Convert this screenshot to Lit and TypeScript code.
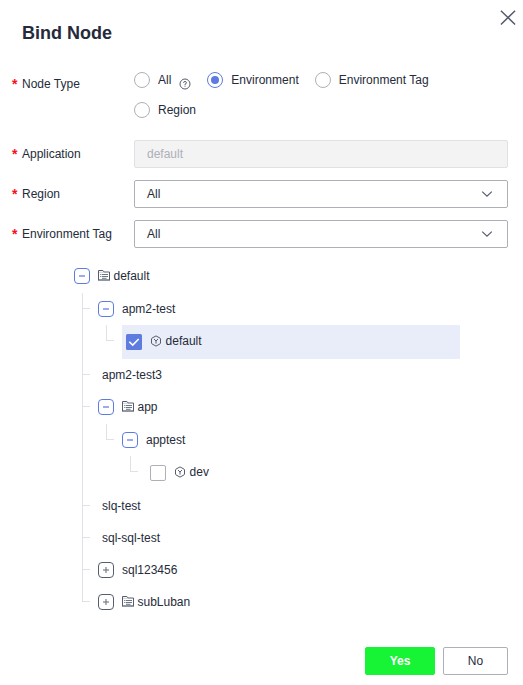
import { LitElement, html, css, svg, nothing, TemplateResult } from "lit";
import { customElement, property } from "lit/decorators.js";
import { classMap } from "lit/directives/class-map.js";

interface TreeItem {
  label: string;
  icon?: "folder" | "env";
  toggle?: "open" | "closed";
  check?: "on" | "off";
  children?: TreeItem[];
}

const TREE: TreeItem = {
  label: "default",
  icon: "folder",
  toggle: "open",
  children: [
    {
      label: "apm2-test",
      toggle: "open",
      children: [{ label: "default", icon: "env", check: "on" }],
    },
    { label: "apm2-test3" },
    {
      label: "app",
      icon: "folder",
      toggle: "open",
      children: [
        {
          label: "apptest",
          toggle: "open",
          children: [{ label: "dev", icon: "env", check: "off" }],
        },
      ],
    },
    { label: "slq-test" },
    { label: "sql-sql-test" },
    { label: "sql123456", toggle: "closed" },
    { label: "subLuban", icon: "folder", toggle: "closed" },
  ],
};

const folderIcon = html`<svg class="folder" width="12" height="12" viewBox="0 0 12 12" fill="none" stroke="#575d6c">
  <path d="M.5 11V1.5" />
  <path d="M.5 1.5h4.4l1.3 1.5h5.3V11" />
  <path d="M0 11h12" stroke-width="1.3" />
  <path d="M1 3.3h5.5" stroke-opacity=".4" stroke-width=".8" />
  <path d="M2.2 5.5h1.2M4 5.5h6M2.2 7.5h1.2M4 7.5h6M4 9.3h4.5" stroke-opacity=".85" />
</svg>`;

const envIcon = html`<svg class="env" width="12" height="12" viewBox="0 0 12 12" fill="none" stroke="#575d6c">
  <path d="M6 .9 10 3.1Q10.5 3.4 10.5 4v4q0 .6-.5.9L6 11.1 2 8.9Q1.5 8.6 1.5 8V4q0-.6.5-.9Z" />
  <path d="M4 4l2 2 2-2M6 6v2.6" />
</svg>`;

@customElement("tree-node")
export class TreeNode extends LitElement {
  @property({ attribute: false }) item!: TreeItem;

  static styles = css`
    :host { display: block; }
    .row { display: flex; align-items: flex-start; height: 32px; line-height: 32px; }
    .row.tall { height: 33px; }
    .row.leaf { height: 34px; padding-left: 4px; }
    .row.plain { padding-left: 4px; }
    .row.selected { background: #e9edfa; }
    .toggle { flex: none; margin: 8px 8px 0 0; }
    .check { flex: none; margin: 9px 8px 0 0; }
    .folder { flex: none; margin: 9px 3.5px 0 0; }
    .env { flex: none; margin: 10px 3.6px 0 0; }
    .children { padding-left: 24px; }
    .child { position: relative; }
    .child::before {
      content: ""; position: absolute; left: -16px; top: 0; width: 1px; height: 100%;
      background: #dfe1e6;
    }
    .child:last-child::before { height: 16px; }
    .child::after {
      content: ""; position: absolute; left: -15px; top: 15px; width: 7px; height: 1px;
      background: #dfe1e6;
    }
  `;

  private toggle(kind: "open" | "closed") {
    const open = kind === "open";
    return html`<svg class="toggle" width="16" height="16" viewBox="0 0 16 16" fill="none">
      <rect x=".5" y=".5" width="15" height="15" rx="3.5" stroke=${open ? "#5e7ce0" : "#575d6c"} />
      <path d="M5 8h6" stroke=${open ? "#8198e7" : "#777c89"} stroke-width=${open ? 1.6 : 1.2} />
      ${open ? nothing : svg`<path d="M8 5v6" stroke="#777c89" stroke-width="1.2" />`}
    </svg>`;
  }

  private check(state: "on" | "off") {
    return state === "on"
      ? html`<svg class="check" width="16" height="16" viewBox="0 0 16 16" fill="none">
          <rect width="16" height="16" rx="1.5" fill="#5e7ce0" />
          <path d="M3.3 7.8 6.7 11.1 12.7 5" stroke="#fff" stroke-width="1.6" />
        </svg>`
      : html`<svg class="check" width="16" height="16" viewBox="0 0 16 16">
          <rect x=".5" y=".5" width="15" height="15" rx="1.5" fill="#fff" stroke="#adb0b8" />
        </svg>`;
  }

  render(): TemplateResult {
    const { label, icon, toggle, check, children } = this.item;
    const row = {
      row: true,
      tall: icon === "folder" && !!children,
      leaf: !!check,
      plain: !toggle && !check,
      selected: check === "on",
    };
    return html`
      <div class=${classMap(row)}>
        ${toggle ? this.toggle(toggle) : nothing}
        ${check ? this.check(check) : nothing}
        ${icon === "folder" ? folderIcon : icon === "env" ? envIcon : nothing}
        <span>${label}</span>
      </div>
      ${children
        ? html`<div class="children">
            ${children.map((c) => html`<div class="child"><tree-node .item=${c}></tree-node></div>`)}
          </div>`
        : nothing}
    `;
  }
}

@customElement("app-root")
export class AppRoot extends LitElement {
  static styles = css`
    :host {
      display: block; box-sizing: border-box; position: relative;
      width: 523px; height: 685px; padding: 20px 15px 0 12px; overflow: hidden;
      background: #fff; color: #252b3a;
      font: 12px/16px "Liberation Sans", Arial, sans-serif;
    }
    .close { position: absolute; left: 500px; top: 10px; }
    h1 { margin: 0 0 20px 10px; font-size: 18px; line-height: 26px; height: 26px; font-weight: 700; }
    .field { display: flex; align-items: center; height: 28px; margin-bottom: 12px; }
    .field.types { height: 58px; align-items: flex-start; padding-top: 6px; box-sizing: border-box; margin-bottom: 16px; }
    .types .label { padding-top: 4px; }
    .label { flex: none; width: 122px; display: flex; align-items: center; }
    .star {
      width: 10px; height: 16px; color: #f5121d;
      font: 700 14px/16px "Liberation Sans", Arial, sans-serif;
    }
    .options { display: flex; flex-wrap: wrap; row-gap: 12px; }
    .option { display: flex; margin-right: 16px; }
    .option svg { flex: none; }
    .dot { margin-right: 8px; }
    .help { margin: 6px 0 0 8px; }
    .box {
      flex: 1; height: 28px; box-sizing: border-box; border: 1px solid #adb0b8; border-radius: 2px;
      padding: 0 14px 0 12px; display: flex; align-items: center; justify-content: space-between;
    }
    .box.disabled { background: #f3f3f3; border-color: #dfe1e6; color: #adb0b8; }
    .tree { margin: 12px 48px 0 62px; }
    .actions { display: flex; justify-content: flex-end; gap: 8px; margin-top: 29px; }
    .btn {
      box-sizing: border-box; height: 28px; line-height: 26px; border: 1px solid #adb0b8; border-radius: 2px;
      width: 65px; text-align: center;
    }
    .btn.primary { width: 70px; background: #16f435; border-color: #16f435; color: #fff; font-weight: 700; }
  `;

  private label(text: string) {
    return html`<div class="label"><span class="star">*</span><span>${text}</span></div>`;
  }

  private radio(text: string, on = false, help = false) {
    return html`<div class="option">
      <svg class="dot" width="16" height="16" viewBox="0 0 16 16" fill="none">
        <circle cx="8" cy="8" r="7.5" stroke=${on ? "#5e7ce0" : "#adb0b8"} />
        ${on ? svg`<circle cx="8" cy="8" r="4" fill="#5e7ce0" />` : nothing}
      </svg>
      <span>${text}</span>
      ${help
        ? html`<svg class="help" width="12" height="12" viewBox="0 0 12 12" fill="none" stroke="#575d6c">
            <circle cx="6" cy="6" r="5" />
            <path d="M4.5 4.8Q4.6 3.5 6 3.5T7.5 4.8Q7.5 5.6 6 6.2V7M6 7.7v1" />
          </svg>`
        : nothing}
    </div>`;
  }

  private select(label: string) {
    return html`<div class="field">
      ${this.label(label)}
      <div class="box">
        <span>All</span>
        <svg width="12" height="8" viewBox="0 0 12 8" fill="none" stroke="#575d6c" stroke-width="1.2">
          <path d="M1.2 1.6 6 6.2 10.8 1.6" />
        </svg>
      </div>
    </div>`;
  }

  render() {
    return html`
      <svg class="close" width="16" height="16" viewBox="0 0 16 16" stroke="#575d6c" stroke-width="1.5">
        <path d="M.9.7 15.1 14.5M15.1.7.9 14.5" />
      </svg>
      <h1>Bind Node</h1>
      <div class="field types">
        ${this.label("Node Type")}
        <div class="options">
          ${this.radio("All", false, true)}${this.radio("Environment", true)}${this.radio("Environment Tag")}${this.radio("Region")}
        </div>
      </div>
      <div class="field">${this.label("Application")}<div class="box disabled">default</div></div>
      ${this.select("Region")} ${this.select("Environment Tag")}
      <tree-node class="tree" .item=${TREE}></tree-node>
      <div class="actions">
        <div class="btn primary">Yes</div>
        <div class="btn">No</div>
      </div>
    `;
  }
}
